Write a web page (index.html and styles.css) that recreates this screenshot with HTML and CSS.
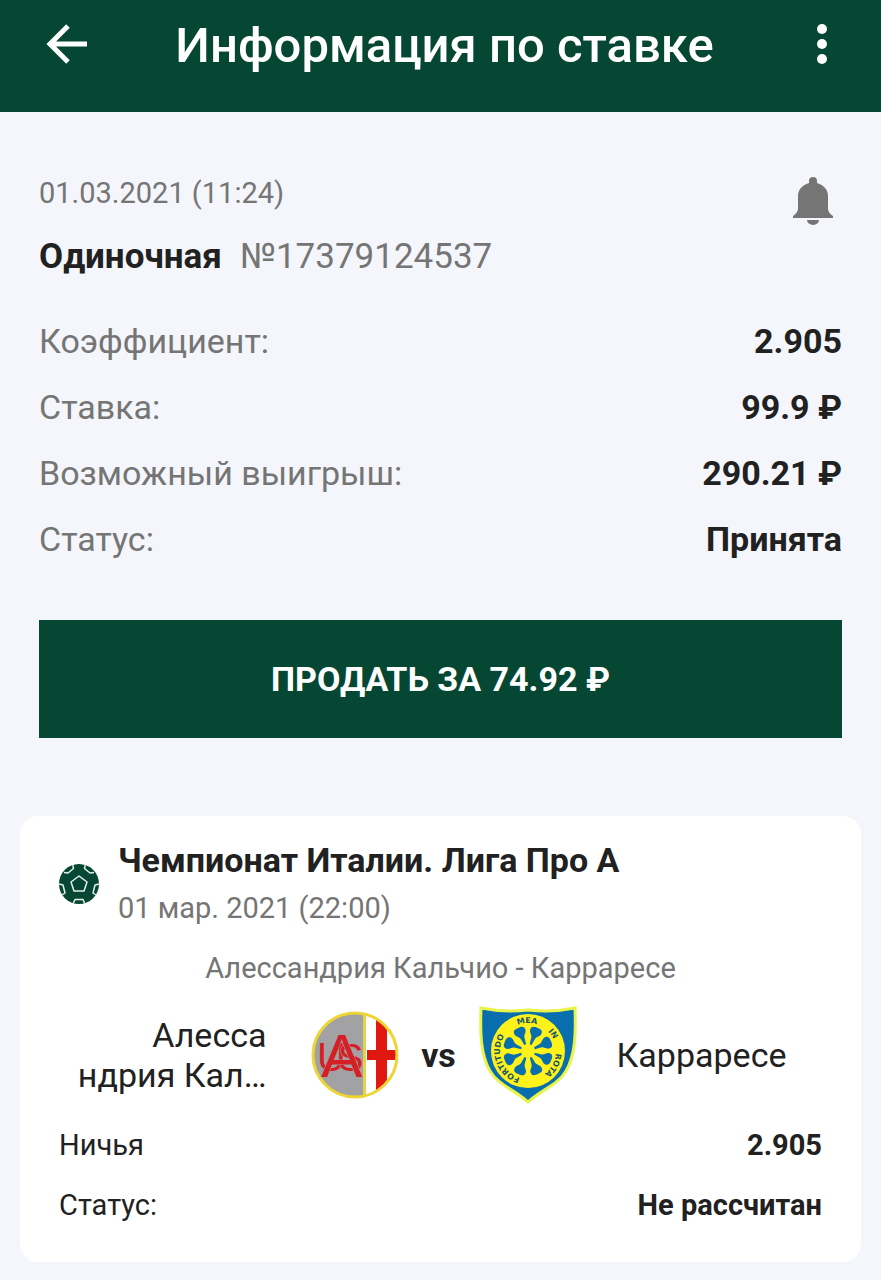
FILE: index.html
```html
<!DOCTYPE html>
<html lang="ru">
<head>
<meta charset="UTF-8">
<meta name="viewport" content="width=device-width, initial-scale=1.0">
<title>Информация по ставке</title>
<link rel="stylesheet" href="styles.css">
</head>
<body>
<header class="topbar">
  <button type="button" class="icon-button" aria-label="Назад">
    <svg width="42" height="42" viewBox="0 0 42 42" fill="none" stroke="#fff" stroke-width="5">
      <path d="M41 21H5M22 3L4 21l18 18"/>
    </svg>
  </button>
  <h1>Информация по ставке</h1>
  <button type="button" class="icon-button" aria-label="Меню">
    <svg width="42" height="42" viewBox="0 0 42 42" fill="#fff">
      <circle cx="21" cy="6" r="5"/>
      <circle cx="21" cy="21" r="5"/>
      <circle cx="21" cy="36" r="5"/>
    </svg>
  </button>
</header>

<main>
<section class="bet">
  <div class="bet-head">
    <div>
      <p class="bet-date">01.03.2021 (11:24)</p>
      <p class="bet-type"><strong>Одиночная</strong> <span>№17379124537</span></p>
    </div>
    <button type="button" class="bell" aria-label="Уведомления">
      <svg width="40" height="48" viewBox="0 0 40 48" fill="#757575">
        <path d="M16 6V4a4 4 0 0 1 8 0v2c7 2 11 7 11 13v12c0 3 1 5 5 8v2H0v-2c4-3 5-5 5-8V19C5 13 9 8 16 6z"/>
        <path d="M14 43h12a6 5 0 0 1-12 0z"/>
      </svg>
    </button>
  </div>

  <dl class="bet-info">
    <div class="row"><dt>Коэффициент:</dt><dd>2.905</dd></div>
    <div class="row"><dt>Ставка:</dt><dd>99.9 ₽</dd></div>
    <div class="row"><dt>Возможный выигрыш:</dt><dd>290.21 ₽</dd></div>
    <div class="row"><dt>Статус:</dt><dd>Принята</dd></div>
  </dl>

  <button type="button" class="sell">ПРОДАТЬ ЗА 74.92 ₽</button>
</section>

<section class="card">
  <div class="league">
    <svg width="40" height="40" viewBox="0 0 40 40">
      <clipPath id="ball"><circle cx="20" cy="20" r="20"/></clipPath>
      <circle cx="20" cy="20" r="20" fill="#064734"/>
      <g clip-path="url(#ball)" fill="none" stroke="#e4f1ec" stroke-width="1.5" stroke-linejoin="round">
        <path d="M20 12l8 6-3 9H15l-3-9z"/>
        <path d="M5 8.500l4 .5 5.500-4.500L13.500 0M35 8.500l-4 .5-5.500-4.500L26.500 0"/>
        <path d="M0 20l4 1 2 8-3 2M40 20l-4 1-2 8 3 2"/>
        <path d="M14 40l2-4.500h8l2 4.500"/>
      </g>
    </svg>
    <div>
      <h2>Чемпионат Италии. Лига Про А</h2>
      <p class="league-date">01 мар. 2021 (22:00)</p>
    </div>
  </div>

  <p class="match">Алессандрия Кальчио - Карраресе</p>

  <div class="teams">
    <p class="team home">Алесса<br>ндрия Кал…</p>
    <svg class="crest" width="88" height="88" viewBox="0 0 88 88">
      <clipPath id="home"><circle cx="44" cy="44" r="42"/></clipPath>
      <g clip-path="url(#home)">
        <path fill="#a2a2a5" d="M0 0h53v88H0z"/>
        <path fill="#fff" d="M53 0h35v88H53z"/>
        <path fill="#e0180f" d="M65 0h11v88H65zM56 39h32v10H56z"/>
        <path fill="#e9d24b" d="M52 0h3v88h-3z"/>
      </g>
      <text class="monogram"><tspan x="6" y="60" font-size="40">U</tspan><tspan x="27" y="60" font-size="38">S</tspan><tspan x="10" y="66" font-size="62">A</tspan></text>
      <circle cx="44" cy="44" r="42" fill="none" stroke="#eed536" stroke-width="3"/>
    </svg>
    <span class="vs">vs</span>
    <svg class="crest" width="98" height="98" viewBox="0 0 98 98">
      <path d="M2 2c15 3 29 4 47 2 18 2 32 1 47-2 1 27 0 48-9 63-8 14-25 19-38 31C36 84 19 79 11 65 2 50 1 29 2 2z" fill="#086ead" stroke="#e8f449" stroke-width="3"/>
      <circle cx="49" cy="45" r="37" fill="#fff21a"/>
      <defs>
        <path id="motto" d="M49 73a28 28 0 0 1 0-56a28 28 0 0 1 0 56"/>
        <path id="spoke" d="M48 38l-1-7c-1-3-4-4-4-7 0-4 3-4 6-4s6 0 6 4c0 3-3 4-4 7l-1 7z"/>
      </defs>
      <text class="motto">
        <textPath href="#motto" startOffset="34">FORTITUDO</textPath>
        <textPath href="#motto" startOffset="87">MEA</textPath>
        <textPath href="#motto" startOffset="115">IN</textPath>
        <textPath href="#motto" startOffset="146">ROTA</textPath>
      </text>
      <g fill="#086ead">
        <use href="#spoke" transform="rotate(22 49 45)"/>
        <use href="#spoke" transform="rotate(67 49 45)"/>
        <use href="#spoke" transform="rotate(112 49 45)"/>
        <use href="#spoke" transform="rotate(157 49 45)"/>
        <use href="#spoke" transform="rotate(202 49 45)"/>
        <use href="#spoke" transform="rotate(247 49 45)"/>
        <use href="#spoke" transform="rotate(292 49 45)"/>
        <use href="#spoke" transform="rotate(337 49 45)"/>
      </g>
    </svg>
    <p class="team away">Карраресе</p>
  </div>

  <dl class="outcome">
    <div class="row"><dt>Ничья</dt><dd>2.905</dd></div>
    <div class="row"><dt>Статус:</dt><dd>Не рассчитан</dd></div>
  </dl>
</section>
</main>
</body>
</html>
```
FILE: styles.css
```css
* {
  margin: 0;
  padding: 0;
  box-sizing: border-box;
}

body {
  font-family: Roboto, sans-serif;
  font-size: 34px;
  background: #f4f6fb;
  color: #212121;
}

button {
  border: none;
  background: none;
  font-family: inherit;
  cursor: pointer;
}

svg {
  display: block;
  flex-shrink: 0;
}

.topbar {
  display: flex;
  justify-content: space-between;
  height: 112px;
  padding: 16px 38px 40px 46px;
  background: #064734;
  color: #fff;
}

.topbar h1 {
  font-size: 49px;
  line-height: 60px;
  font-weight: 500;
}

.icon-button {
  height: 56px;
}

.bet {
  padding: 60px 39px 0;
}

.bet-head {
  display: flex;
  justify-content: space-between;
  padding-right: 9px;
}

.bet-date {
  font-size: 29px;
  line-height: 42px;
  color: #757575;
}

.bet-type {
  display: flex;
  gap: 18px;
  margin-top: 21px;
  font-size: 35px;
  line-height: 44px;
}

.bet-type span {
  color: #757575;
}

.bell {
  align-self: flex-start;
  margin-top: 5px;
}

.bet-info {
  margin-top: 29px;
}

.row {
  display: flex;
  justify-content: space-between;
}

.row dd {
  font-weight: 700;
}

.bet-info .row {
  line-height: 66px;
}

.bet-info dt {
  color: #757575;
}

.sell {
  width: 100%;
  height: 118px;
  margin-top: 48px;
  background: #064734;
  color: #fff;
  font-size: 34px;
  font-weight: 700;
}

.card {
  margin: 78px 20px 18px;
  padding: 20px 39px 27px;
  border-radius: 18px;
  background: #fff;
}

.league {
  display: flex;
  align-items: center;
  gap: 19px;
}

.league h2 {
  font-size: 34px;
  line-height: 48px;
  font-weight: 700;
}

.league-date {
  font-size: 29px;
  line-height: 48px;
  color: #757575;
}

.match {
  margin-top: 12px;
  font-size: 29px;
  line-height: 48px;
  text-align: center;
  color: #757575;
}

.teams {
  display: grid;
  grid-template-columns: 1fr 88px 40px 98px 1fr;
  align-items: center;
  column-gap: 20px;
  min-height: 123px;
  padding: 3px 0 0 6px;
}

.team {
  font-size: 34px;
  line-height: 40px;
}

.home {
  padding-right: 24px;
  text-align: right;
}

.away {
  padding-left: 20px;
}

.vs {
  font-weight: 700;
  text-align: center;
}

.monogram {
  fill: #d51f25;
  stroke: #a2a2a5;
  stroke-width: 1px;
  paint-order: stroke;
  font-family: "Liberation Sans Narrow", "Liberation Sans", sans-serif;
}

.motto {
  fill: #17566b;
  font-family: "DejaVu Sans", sans-serif;
  font-size: 8px;
  font-weight: 700;
  text-anchor: middle;
}

.outcome {
  font-size: 29px;
  line-height: 60px;
}
```
